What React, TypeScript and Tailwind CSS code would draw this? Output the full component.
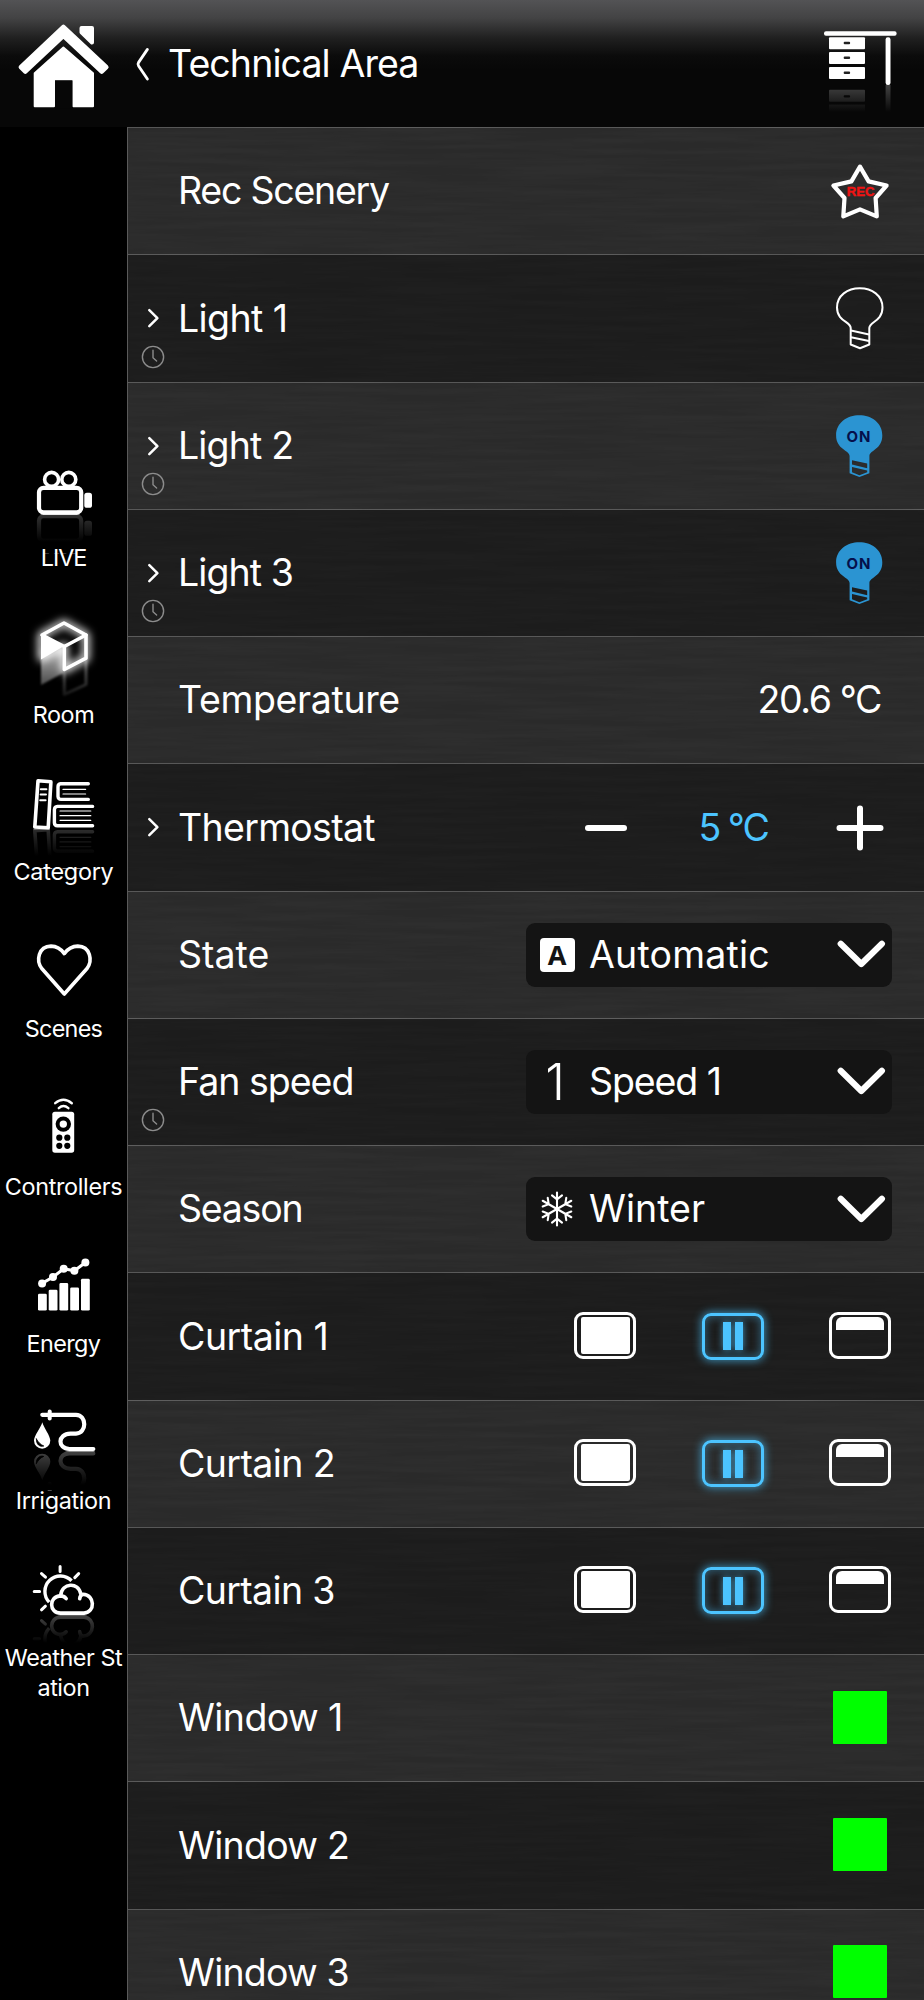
import type { ReactNode } from 'react';

type SideItem = { label: string; icon: ReactNode; tracking: string };

// Draws its children plus a faded copy flipped around `axis`
const Mirrored = ({ id, axis, strength = 0.22, children }: { id: string; axis: number; strength?: number; children: ReactNode }) => (
  <>
    <defs>
      <linearGradient id={`${id}-g`} x1="0" y1={axis} x2="0" y2="84" gradientUnits="userSpaceOnUse">
        <stop offset="0" stopColor="#fff" stopOpacity={strength} />
        <stop offset="1" stopColor="#fff" stopOpacity="0" />
      </linearGradient>
      <mask id={`${id}-m`} maskUnits="userSpaceOnUse" x="0" y={axis} width="128" height="40">
        <rect x="0" y={axis} width="128" height="40" fill={`url(#${id}-g)`} />
      </mask>
    </defs>
    {children}
    <g mask={`url(#${id}-m)`}>
      <g transform={`translate(0 ${axis * 2}) scale(1 -1)`}>{children}</g>
    </g>
  </>
);

const SideIcon = ({ children }: { children: ReactNode }) => (
  <svg className="block h-[84.7px] w-[127px] overflow-visible" viewBox="0 0 127 84.7" fill="none" stroke="#fff" strokeLinecap="round" strokeLinejoin="round">
    {children}
  </svg>
);

const LiveIcon = () => (
  <SideIcon>
    <Mirrored id="live" axis={56.3} strength={0.2}>
      <circle cx="51.6" cy="21.4" r="7" strokeWidth="3.6" />
      <circle cx="68.8" cy="21.4" r="7" strokeWidth="3.6" />
      <rect x="39" y="29.8" width="42.2" height="24.6" rx="4.5" strokeWidth="4.2" />
      <rect x="84.3" y="34.8" width="7.7" height="15" rx="2.6" fill="#fff" stroke="none" />
    </Mirrored>
  </SideIcon>
);

const RoomIcon = () => (
  <SideIcon>
    <defs>
      <linearGradient id="room-g" x1="0" y1="38" x2="0" y2="80" gradientUnits="userSpaceOnUse">
        <stop offset="0" stopColor="#fff" stopOpacity="0.65" />
        <stop offset="0.75" stopColor="#fff" stopOpacity="0.3" />
        <stop offset="1" stopColor="#fff" stopOpacity="0" />
      </linearGradient>
      <linearGradient id="room-h" x1="0" y1="42" x2="0" y2="82" gradientUnits="userSpaceOnUse">
        <stop offset="0" stopColor="#fff" stopOpacity="0.4" />
        <stop offset="1" stopColor="#fff" stopOpacity="0.08" />
      </linearGradient>
      <filter id="room-glow" x="-40%" y="-40%" width="180%" height="180%">
        <feGaussianBlur stdDeviation="4" />
      </filter>
      <filter id="room-soft" x="-40%" y="-40%" width="180%" height="180%">
        <feGaussianBlur stdDeviation="1" />
      </filter>
    </defs>
    <g filter="url(#room-soft)">
      <path d="M41 42 L63 31 V58 L41 70 Z" fill="url(#room-g)" stroke="none" />
      <path d="M64.3 55 V79.5 L86 69.5 V44" stroke="url(#room-h)" strokeWidth="3" />
    </g>
    <path d="M64 8 L86 20 V43.5 L64.3 55 V31 L41.5 43 V20 Z" strokeWidth="6.5" filter="url(#room-glow)" />
    <path d="M41 20 L64.3 31 L41 44.5 Z" fill="#fff" stroke="none" />
    <g strokeWidth="3.6">
      <path d="M64 8 L86 20 L64.3 31.5 L42 20 Z" />
      <path d="M86 20 V43.2 L64.3 54.5 V31.5" />
    </g>
  </SideIcon>
);

const CategoryIcon = () => (
  <SideIcon>
    <Mirrored id="category" axis={56.8} strength={0.18}>
      <path d="M38 8.8 L50.9 9.8 L48.2 55.8 L34.8 55 Z" strokeWidth="3.6" />
      <path d="M40.8 17.2 H46.4 M40.6 22.6 H46 M40.2 28.2 H45.6" strokeWidth="2" />
      <path d="M88.3 11.8 H60.5 Q58 12 58 15 V24.5 Q58.2 27.4 61 27.4 H88.3" strokeWidth="3.4" />
      <path d="M63 17.4 H85.6 M63 22 H85.6" strokeWidth="1.2" />
      <path d="M92.6 34.4 H57.5 Q54.6 34.6 54.4 37.5 V50.8 Q54.6 53.6 57.5 53.8 H92.6" strokeWidth="3.4" />
      <path d="M60 39 H90.8 M60 43.7 H90.8 M60 48.3 H90.8" strokeWidth="1.2" />
    </Mirrored>
  </SideIcon>
);

const ScenesIcon = () => (
  <SideIcon>
    <path
      d="M64.3 64 L42 38.8 C35.6 31 38.4 16.2 51 16.1 C57.3 16.2 61.2 19.2 64.3 23.6 C67.5 19.2 71.4 16.2 77.8 16.1 C90.4 16.2 93 31 86.8 38.8 Z"
      strokeWidth="3.6"
    />
  </SideIcon>
);

const ControllersIcon = () => (
  <SideIcon>
    <path d="M55.2 16.2 Q63.4 9.4 71.8 16.2" strokeWidth="2.4" />
    <path d="M58.8 21.2 Q63.4 17 68.4 21.2" strokeWidth="2.4" />
    <g stroke="none">
      <rect x="52.3" y="24.7" width="21.9" height="41" rx="2.6" fill="#fff" />
      <circle cx="63.3" cy="37.1" r="7.7" fill="#000" />
      <circle cx="63.3" cy="37.1" r="3.7" fill="#fff" />
      <circle cx="59.3" cy="50.7" r="3.1" fill="#000" />
      <circle cx="67.3" cy="50.7" r="3.1" fill="#000" />
      <circle cx="59.3" cy="58.8" r="3.1" fill="#000" />
      <circle cx="67.3" cy="58.8" r="3.1" fill="#000" />
    </g>
  </SideIcon>
);

const ENERGY_BARS = [
  [38, 49.7],
  [48.7, 45.7],
  [59.4, 39],
  [70.2, 43.4],
  [81, 34.8],
];

const ENERGY_POINTS = [
  [42.1, 39.4],
  [53, 33],
  [63.7, 24.8],
  [74.4, 26.8],
  [85.4, 18.5],
];

const EnergyIcon = () => (
  <SideIcon>
    {ENERGY_BARS.map(([x, y]) => (
      <rect key={x} x={x} y={y} width="8.8" height={66.6 - y} rx="1.4" fill="#fff" stroke="none" />
    ))}
    <polyline points={ENERGY_POINTS.map((p) => p.join(',')).join(' ')} strokeWidth="3" />
    {ENERGY_POINTS.map(([x, y]) => (
      <circle key={x} cx={x} cy={y} r="4" fill="#fff" stroke="none" />
    ))}
  </SideIcon>
);

const IrrigationIcon = () => (
  <SideIcon>
    <Mirrored id="irrigation" axis={50.2} strength={0.26}>
      <path d="M42.3 13.8 H76 C87 14 87 32.3 76 32.6 H70.5 C57.3 33 57.3 47.8 69.5 48 H93.3" strokeWidth="4.2" />
      <path d="M49.7 10.5 V17.6" strokeWidth="4" />
      <path d="M42.3 21.2 C43.8 27 50.3 34.5 50.3 39.6 A8.15 8.15 0 0 1 34 39.6 C34 34.5 40.8 27 42.3 21.2 Z" fill="#fff" stroke="none" />
      <path d="M36.4 38 C36 43.5 40 46.3 43.8 45 C40.4 43.6 38.6 41.6 36.4 38 Z" fill="#000" stroke="#000" strokeWidth="0.8" />
    </Mirrored>
  </SideIcon>
);

const WeatherIcon = () => (
  <SideIcon>
    <Mirrored id="weather" axis={56.2} strength={0.26}>
      <path d="M49.2 43.2 A15.2 15.2 0 0 1 71.6 21.8" strokeWidth="3.4" strokeLinecap="butt" />
      <path d="M60.1 7.5 V12.6 M34.2 32.6 H39.6 M41.5 14.6 L45.5 18.2 M78.7 14.6 L74.8 18.6 M41.5 50.8 L45.4 47.2" strokeWidth="3" />
      <path d="M66.2 39.6 C64.5 37.6 62.6 36.9 60.4 36.9 C48.6 37.4 48.8 54 60.5 54.1 H84 C95.6 53.6 95 35.6 83 35.2 C80.6 36 79.8 37.6 79.7 39.8" strokeWidth="3.6" />
      <path d="M60.6 36.8 C62 23.4 78.4 22.6 80.8 35" strokeWidth="3.6" />
    </Mirrored>
  </SideIcon>
);

const SIDE_ITEMS: SideItem[] = [
  { label: 'LIVE', icon: <LiveIcon />, tracking: 'tracking-[-1.1px]' },
  { label: 'Room', icon: <RoomIcon />, tracking: 'tracking-[-0.4px]' },
  { label: 'Category', icon: <CategoryIcon />, tracking: 'tracking-[-0.25px]' },
  { label: 'Scenes', icon: <ScenesIcon />, tracking: 'tracking-[-0.75px]' },
  { label: 'Controllers', icon: <ControllersIcon />, tracking: 'tracking-[-0.35px]' },
  { label: 'Energy', icon: <EnergyIcon />, tracking: 'tracking-[-0.6px]' },
  { label: 'Irrigation', icon: <IrrigationIcon />, tracking: 'tracking-[-0.35px]' },
  { label: 'Weather St\nation', icon: <WeatherIcon />, tracking: 'tracking-[-0.45px]' },
];

const HomeIcon = () => (
  <svg className="block h-[127px] w-[127px]" viewBox="0 0 127 127" fill="#fff" stroke="#fff" strokeLinejoin="round">
    <path d="M63.4 26.8 L20.8 67.2 L25.3 71.6 L63.4 35.9 L101.7 71.6 L106.4 67.2 Z" strokeWidth="4.4" />
    <path d="M81.5 28 H92 V42.5 L81.5 32.2 Z" strokeWidth="4" />
    <path d="M63.4 47.5 L34.7 73.3 V106.3 H54 V79.4 H73.3 V106.3 H93 V73.3 Z" strokeWidth="2" />
    <rect x="55" y="80.4" width="17.4" height="28" fill="#070707" stroke="none" />
  </svg>
);

const BackIcon = () => (
  <svg className="block h-[40px] w-[20px]" viewBox="0 0 20 40" fill="none" stroke="#fff" strokeWidth="2.8" strokeLinecap="round" strokeLinejoin="round">
    <path d="M14.4 5.4 L5.6 18.4 Q4.4 20.2 5.6 22 L14.4 35" />
  </svg>
);

const DeskIcon = () => (
  <svg className="block h-[127px] w-[80px]" viewBox="820 0 80 127" fill="#fff">
    <defs>
      <linearGradient id="desk-g" x1="0" y1="85" x2="0" y2="112" gradientUnits="userSpaceOnUse">
        <stop offset="0" stopColor="#fff" stopOpacity="0.24" />
        <stop offset="1" stopColor="#fff" stopOpacity="0" />
      </linearGradient>
    </defs>
    <rect x="824" y="31.3" width="72.6" height="4.4" rx="2" />
    {[37.2, 52, 66.9].map((y) => (
      <g key={y}>
        <rect x="829" y={y} width="36" height="12.1" rx="1" />
        <rect x="843.7" y={y + 4.6} width="6.4" height="2.4" rx="1" fill="#222" />
      </g>
    ))}
    <rect x="885.6" y="37.3" width="4.9" height="47.6" rx="2.2" />
    <g fill="url(#desk-g)">
      <rect x="829" y="89.8" width="36" height="12" rx="1" />
      <rect x="829" y="104.6" width="36" height="7" />
      <rect x="885.6" y="85" width="4.9" height="27" />
    </g>
    <rect x="843.7" y="95.2" width="6.4" height="2.4" rx="1" fill="#070707" />
  </svg>
);

const RecIcon = () => (
  <svg className="h-[72px] w-[72px]" viewBox="0 0 72 72" fill="none">
    <path
      d="M36 11.6 L44.6 26.4 L62.6 30.5 L51.6 43 L52.8 61.4 L36 54.4 L19.3 61.4 L20.5 43 L9.4 30.5 L27.4 26.4 Z"
      stroke="#fff"
      strokeWidth="4.2"
      strokeLinejoin="round"
    />
    <text x="36.6" y="40.6" textAnchor="middle" className="fill-[#f01414] stroke-[#f01414] stroke-[0.4px] font-['Liberation_Sans'] text-[13.2px] font-bold">
      REC
    </text>
  </svg>
);

const BulbOffIcon = () => (
  <svg className="h-[72px] w-[72px]" viewBox="0 0 72 72" fill="none" stroke="#fff" strokeWidth="2" strokeLinejoin="round">
    <path d="M26.7 62.5 V46 C26.7 39.5 13 39.5 13 25.5 C13 13.5 23.5 6.3 35.8 6.3 C48 6.3 58.5 13.5 58.5 25.5 C58.5 39.5 45.3 39.5 45.3 46 V62.5 L36 66.2 Z" />
    <path d="M27 48.6 L45 52.4 M27 55.3 L45 59.1" />
  </svg>
);

const BulbOnIcon = () => (
  <svg className="h-[72px] w-[72px]" viewBox="0 0 72 72">
    <path
      fillRule="evenodd"
      fill="#2b94d2"
      d="M25.6 63.3 V46 C25.6 40 12.1 39.5 12.1 25.4 C12.1 12.8 23.2 5.3 35.3 5.3 C47.4 5.3 58.3 12.8 58.3 25.4 C58.3 39.5 45.4 40 45.4 46 V63.3 L35.4 67 Z M28 50.2 V54.6 L43.2 58.2 V53.4 Z M28 57 V62.2 L35.4 65.2 L43.2 62.2 V60.4 Z"
    />
    <text x="34.9" y="31.6" textAnchor="middle" className="fill-[#050f4b] font-['Inter'] text-[15px] font-bold tracking-[0.8px]">
      ON
    </text>
  </svg>
);

const SnowIcon = () => (
  <svg className="h-[36px] w-[36px]" viewBox="-18 -18 36 36" fill="none" stroke="#fff" strokeWidth="2.1" strokeLinecap="round">
    {[0, 60, 120, 180, 240, 300].map((angle) => (
      <path key={angle} transform={`rotate(${angle})`} d="M0 0 V-16.5 M-5 -13.6 L0 -9.6 L5 -13.6" />
    ))}
  </svg>
);

const AutoIcon = () => (
  <span className="flex h-[34px] w-[35px] items-center justify-center rounded-[4px] bg-white font-['Noto_Sans',sans-serif] text-[27px] leading-none font-bold text-[#141414]">
    A
  </span>
);

const SpeedIcon = () => <span className="mr-[4px] font-['Inter',sans-serif] text-[50px] leading-none font-light text-white">1</span>;

const Cell = ({ children }: { children: ReactNode }) => (
  <div className="relative z-10 flex h-full w-[127.25px] shrink-0 items-center justify-center">{children}</div>
);

const Select = ({ icon, label, tracking }: { icon: ReactNode; label: string; tracking: string }) => (
  <div className="relative z-10 mr-8 flex h-[64px] w-[366px] items-center rounded-[9px] bg-[#141414] pr-[6px]">
    <span className="flex w-[62px] shrink-0 items-center justify-center">{icon}</span>
    <span className={`ml-[1px] flex-1 whitespace-nowrap ${tracking}`}>{label}</span>
    <svg className="mb-[1px] h-[40px] w-[50px]" viewBox="0 0 50 40" fill="none" stroke="#fff" strokeWidth="6.2" strokeLinecap="round" strokeLinejoin="round">
      <path d="M4.7 9.8 L25.3 30 L45.9 9.8" />
    </svg>
  </div>
);

const CurtainControls = () => (
  <>
    <Cell>
      <div className="mr-[1px] mb-[2px] flex h-[47px] w-[62px] items-center justify-center rounded-[9px] border-[3px] border-white">
        <div className="h-[37px] w-[49px] rounded-[2px] bg-white" />
      </div>
    </Cell>
    <Cell>
      <div className="flex h-[47px] w-[62px] items-center justify-center gap-[3.5px] rounded-[9px] border-[3px] border-[#4cc4ff] shadow-[0_0_9px_1px_rgba(76,196,255,0.65),inset_0_0_9px_1px_rgba(76,196,255,0.4)]">
        <div className="h-[28px] w-[8.5px] bg-[#4cc4ff] shadow-[0_0_7px_rgba(76,196,255,0.7)]" />
        <div className="h-[28px] w-[8.5px] bg-[#4cc4ff] shadow-[0_0_7px_rgba(76,196,255,0.7)]" />
      </div>
    </Cell>
    <Cell>
      <div className="mb-[2px] flex h-[47px] w-[62px] justify-center rounded-[9px] border-[3px] border-white pt-[2px]">
        <div className="h-[13px] w-[48px] rounded-t-[6px] bg-white" />
      </div>
    </Cell>
  </>
);

const WindowControl = () => (
  <Cell>
    <div className="mb-[2px] h-[53px] w-[54px] rounded-[1px] bg-[#00ff00]" />
  </Cell>
);

type RowData = { label: string; tracking: string; expandable?: boolean; clock?: boolean; control: ReactNode };

const ROWS: RowData[] = [
  { label: 'Rec Scenery', tracking: 'tracking-[-1.25px]', control: <Cell><RecIcon /></Cell> },
  { label: 'Light 1', tracking: 'tracking-[-0.6px]', expandable: true, clock: true, control: <Cell><BulbOffIcon /></Cell> },
  { label: 'Light 2', tracking: 'tracking-[-0.85px]', expandable: true, clock: true, control: <Cell><BulbOnIcon /></Cell> },
  { label: 'Light 3', tracking: 'tracking-[-0.9px]', expandable: true, clock: true, control: <Cell><BulbOnIcon /></Cell> },
  {
    label: 'Temperature',
    tracking: 'tracking-[-0.36px]',
    control: <span className="relative z-10 pr-[43px] tracking-[-1.4px] whitespace-nowrap">20.6 °C</span>,
  },
  {
    label: 'Thermostat',
    tracking: 'tracking-[-0.7px]',
    expandable: true,
    control: (
      <>
        <Cell>
          <span className="mt-[2px] h-[6px] w-[42px] rounded-full bg-white" />
        </Cell>
        <Cell>
          <span className="tracking-[-2px] whitespace-nowrap text-[#4cc4ff]">5 °C</span>
        </Cell>
        <Cell>
          <svg className="mt-[2px] h-[48px] w-[48px]" viewBox="0 0 48 48" stroke="#fff" strokeWidth="6" strokeLinecap="round">
            <path d="M3.5 24 H44.5 M24 4.5 V43.5" />
          </svg>
        </Cell>
      </>
    ),
  },
  { label: 'State', tracking: 'tracking-[0px]', control: <Select icon={<AutoIcon />} label="Automatic" tracking="tracking-[0.2px]" /> },
  { label: 'Fan speed', tracking: 'tracking-[-1px]', clock: true, control: <Select icon={<SpeedIcon />} label="Speed 1" tracking="tracking-[-1.1px]" /> },
  { label: 'Season', tracking: 'tracking-[-1.25px]', control: <Select icon={<SnowIcon />} label="Winter" tracking="tracking-[0px]" /> },
  { label: 'Curtain 1', tracking: 'tracking-[-0.5px]', control: <CurtainControls /> },
  { label: 'Curtain 2', tracking: 'tracking-[-0.6px]', control: <CurtainControls /> },
  { label: 'Curtain 3', tracking: 'tracking-[-0.65px]', control: <CurtainControls /> },
  { label: 'Window 1', tracking: 'tracking-[-0.6px]', control: <WindowControl /> },
  { label: 'Window 2', tracking: 'tracking-[-0.75px]', control: <WindowControl /> },
  { label: 'Window 3', tracking: 'tracking-[-0.8px]', control: <WindowControl /> },
];

const Row = ({ row }: { row: RowData }) => (
  <li className="relative flex h-[127.25px] shrink-0 items-center border-t border-[#5e5e5e] odd:bg-[#2e2e2e] even:bg-[#1f1f1f]">
    <div className="relative z-10 flex w-[50px] shrink-0 justify-center">
      {row.expandable && (
        <svg className="h-[22px] w-[14px]" viewBox="0 0 14 22" fill="none" stroke="#fff" strokeWidth="2.5" strokeLinecap="round" strokeLinejoin="round">
          <path d="M3.3 3.2 L11.4 11.2 L3.3 19.2" />
        </svg>
      )}
    </div>
    {row.clock && (
      <svg className="absolute bottom-[13px] left-[12.5px] z-10 h-[24px] w-[24px]" viewBox="0 0 24 24" fill="none" stroke="#8c8c8c" strokeWidth="1.4" strokeLinecap="round" strokeLinejoin="round">
        <circle cx="12" cy="12" r="10.6" />
        <path d="M12 5.2 V12.8 L15.6 16" />
      </svg>
    )}
    <span className={`relative z-10 flex-1 whitespace-nowrap ${row.tracking}`}>{row.label}</span>
    {row.control}
  </li>
);

// Faint horizontal streaks of brushed metal
const BrushedMetal = () => (
  <svg className="pointer-events-none absolute inset-0 h-full w-full opacity-[0.08]">
    <filter id="brushed" x="0" y="0" width="100%" height="100%">
      <feTurbulence type="fractalNoise" baseFrequency="0.008 0.18" numOctaves="3" seed="4" />
      <feColorMatrix type="matrix" values="0 0 0 0 0  0 0 0 0 0  0 0 0 0 0  2.4 0 0 0 -0.7" />
    </filter>
    <rect width="100%" height="100%" filter="url(#brushed)" />
  </svg>
);

export default function App() {
  return (
    <div className="flex h-[2000px] w-[924px] flex-col overflow-hidden bg-black font-['Inter',sans-serif] text-[37.5px] leading-none text-white">
      <header className="flex h-[127px] shrink-0 items-center bg-[linear-gradient(to_bottom,#535355_0px,#434344_18px,#202020_38px,#0b0b0b_56px,#070707_70px,#070707_127px)]">
        <HomeIcon />
        <div className="ml-[6px] flex-none">
          <BackIcon />
        </div>
        <h1 className="ml-[15px] flex-1 tracking-[-0.9px] whitespace-nowrap">Technical Area</h1>
        <div className="mr-6">
          <DeskIcon />
        </div>
      </header>

      <div className="flex min-h-0 flex-1">
        <nav className="flex w-[127px] shrink-0 flex-col gap-[42.95px] pt-[331px]">
          {SIDE_ITEMS.map((item) => (
            <div key={item.label} className="flex shrink-0 flex-col items-center">
              {item.icon}
              <span className={`text-center text-[23.4px] leading-[29.6px] whitespace-pre ${item.tracking}`}>{item.label}</span>
            </div>
          ))}
        </nav>

        <main className="relative min-w-0 flex-1 overflow-hidden border-l border-[#5a5a5a]">
          <ul className="flex flex-col">
            {ROWS.map((row) => (
              <Row key={row.label} row={row} />
            ))}
          </ul>
          <BrushedMetal />
        </main>
      </div>
    </div>
  );
}
